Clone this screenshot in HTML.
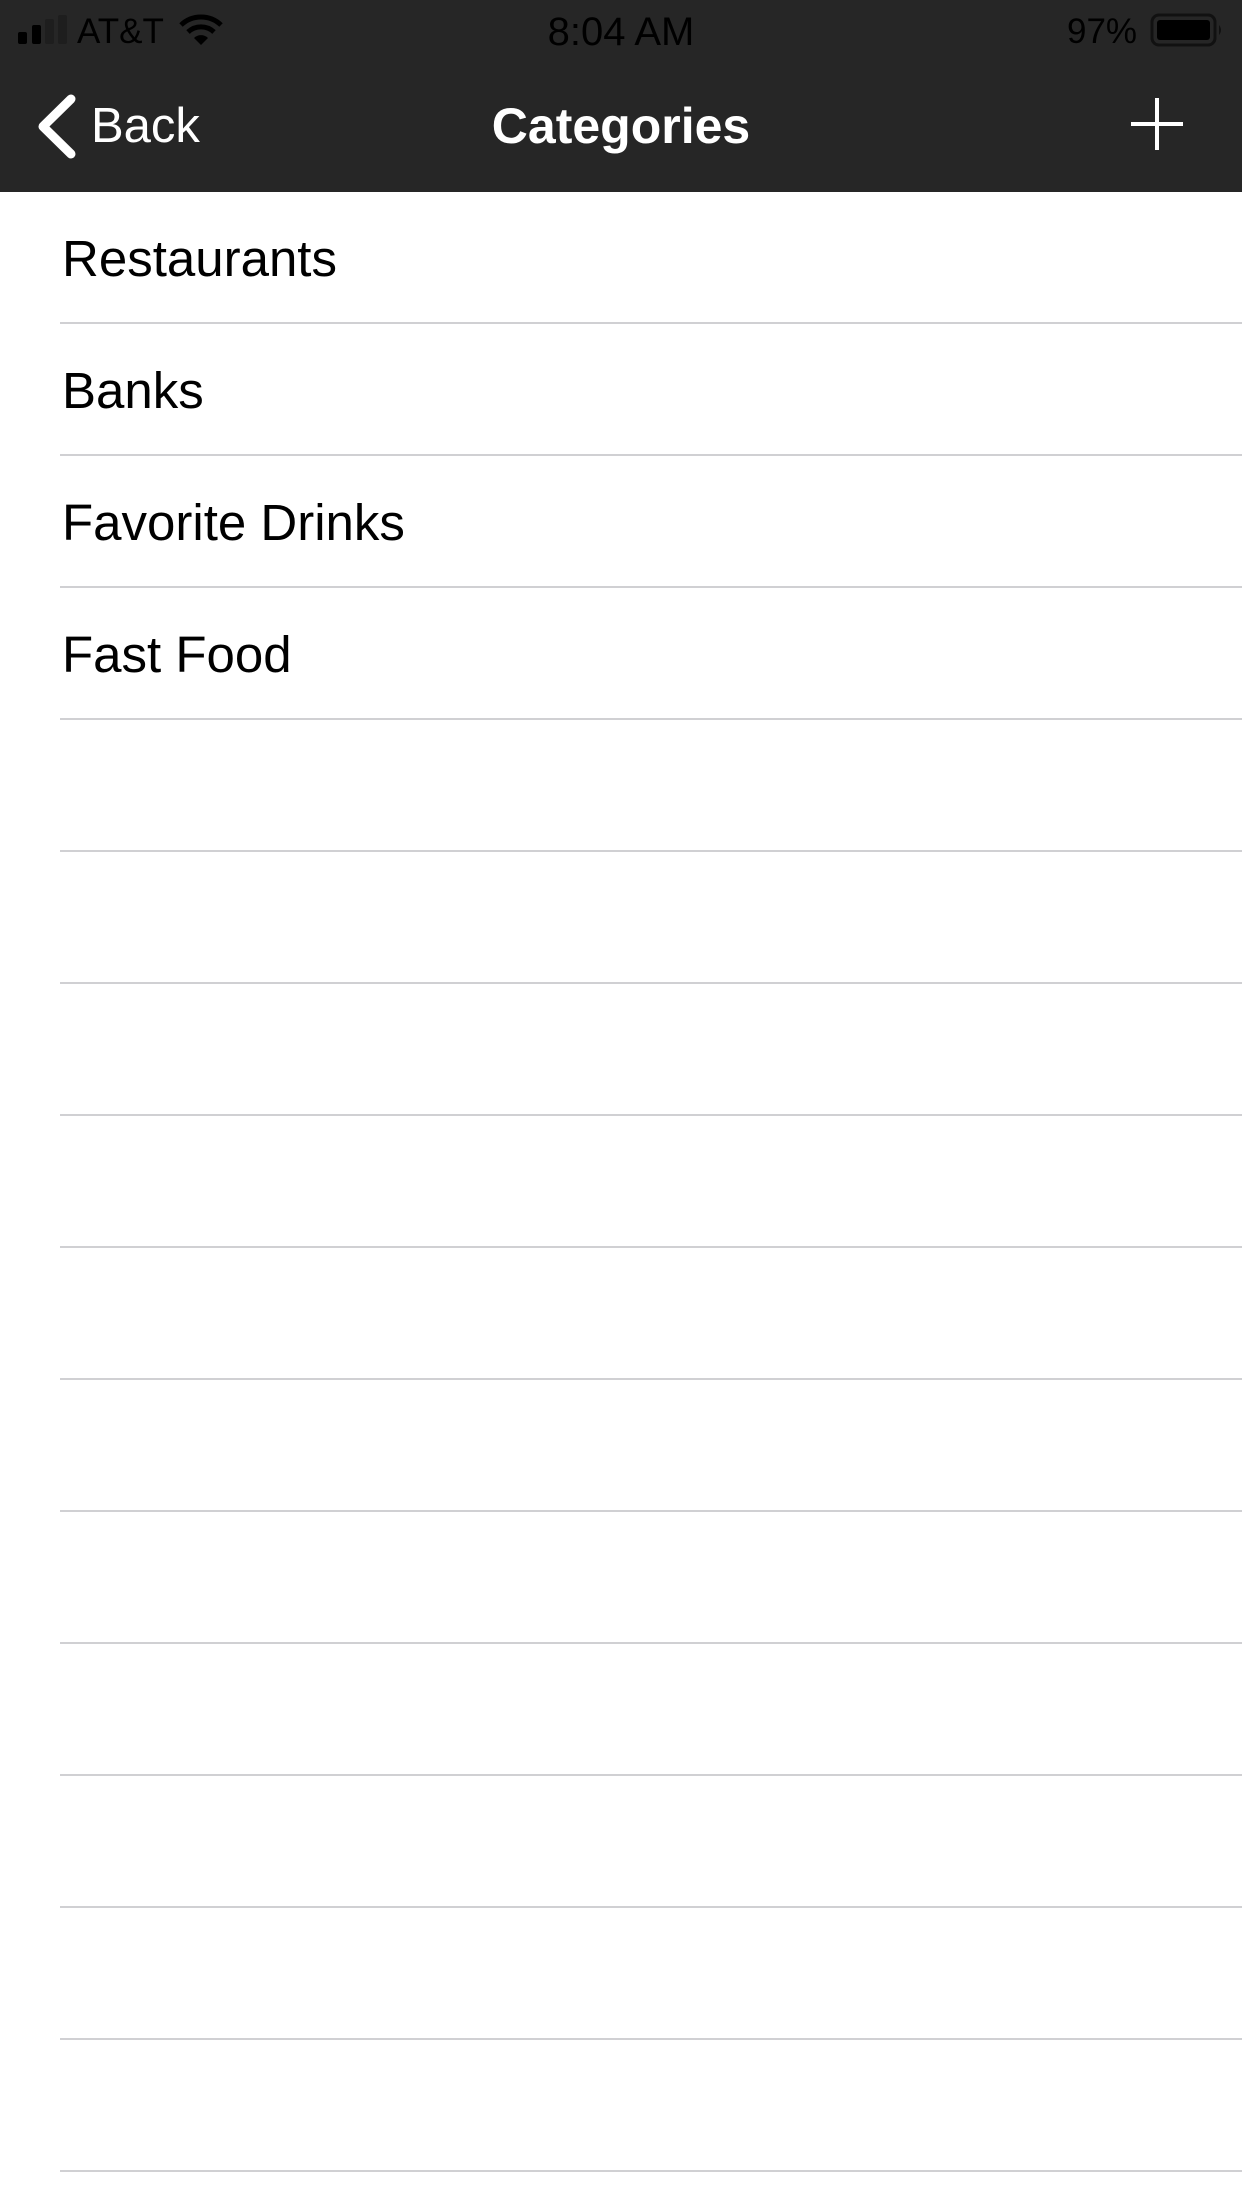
<!DOCTYPE html>
<html><head><meta charset="utf-8"><style>
html,body{margin:0;padding:0;width:1242px;height:2208px;background:#fff;overflow:hidden;font-family:"Liberation Sans",sans-serif}
.top{position:absolute;left:0;top:0;width:1242px;height:192px;background:#262626}
.t{position:absolute;white-space:nowrap;line-height:1}
.sep{position:absolute;left:60px;right:0;height:2px;background:#d0d0d3}
.row{position:absolute;left:62px;font-size:51px;color:#000;line-height:1}
</style></head><body>
<div class="top">
  <svg style="position:absolute;left:0;top:0" width="1242" height="192">
    <rect x="18" y="32" width="9" height="12" rx="2" fill="#000"/>
    <rect x="32" y="25" width="9" height="19" rx="2" fill="#000"/>
    <rect x="45" y="19" width="9" height="25" rx="2" fill="#1e1e1e"/>
    <rect x="58" y="15" width="9" height="29" rx="2" fill="#1e1e1e"/>
    <path d="M181 25 A29 29 0 0 1 221 25" stroke="#000" stroke-width="5" fill="none"/>
    <path d="M188 32 A19 19 0 0 1 214 32" stroke="#000" stroke-width="5" fill="none"/>
    <path d="M194 38 L201 45 L208 38 A10 10 0 0 0 194 38 Z" fill="#000"/>
    <rect x="1152" y="15" width="63" height="30" rx="7" fill="none" stroke="#111" stroke-width="3"/>
    <rect x="1157" y="20" width="53" height="20" rx="3" fill="#000"/>
    <path d="M1219 25 Q1223 30 1219 35 Z" fill="#111"/>
    <path d="M71 99 L43 126.5 L71 154" stroke="#fff" stroke-width="9" fill="none" stroke-linecap="round" stroke-linejoin="round"/>
    <rect x="1155" y="98" width="4" height="52" fill="#fff"/>
    <rect x="1131" y="122" width="52" height="4" fill="#fff"/>
  </svg>
  <div class="t" style="left:77px;top:14px;font-size:35px;color:#000">AT&amp;T</div>
  <div class="t" style="left:0;width:1242px;text-align:center;top:12px;font-size:40px;color:#000">8:04 AM</div>
  <div class="t" style="left:1067px;top:14px;font-size:35px;color:#000">97%</div>
  <div class="t" style="left:91px;top:102px;font-size:49px;color:#fff">Back</div>
  <div class="t" style="left:0;width:1242px;text-align:center;top:101px;font-size:50px;font-weight:bold;color:#fff">Categories</div>
</div>
<div class="row" style="top:233px">Restaurants</div>
<div class="row" style="top:365px">Banks</div>
<div class="row" style="top:497px">Favorite Drinks</div>
<div class="row" style="top:629px">Fast Food</div>
<div class="sep" style="top:322px"></div>
<div class="sep" style="top:454px"></div>
<div class="sep" style="top:586px"></div>
<div class="sep" style="top:718px"></div>
<div class="sep" style="top:850px"></div>
<div class="sep" style="top:982px"></div>
<div class="sep" style="top:1114px"></div>
<div class="sep" style="top:1246px"></div>
<div class="sep" style="top:1378px"></div>
<div class="sep" style="top:1510px"></div>
<div class="sep" style="top:1642px"></div>
<div class="sep" style="top:1774px"></div>
<div class="sep" style="top:1906px"></div>
<div class="sep" style="top:2038px"></div>
<div class="sep" style="top:2170px"></div>
</body></html>
